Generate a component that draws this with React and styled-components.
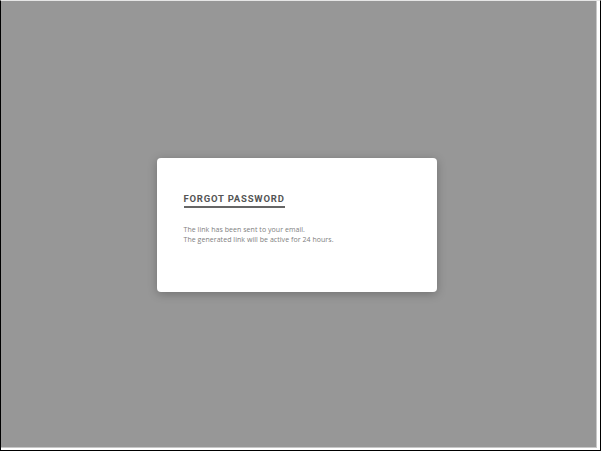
import React from "react";
import styled, { createGlobalStyle } from "styled-components";

const Global = createGlobalStyle`
  html, body { margin: 0; padding: 0; background: #fff; }
  body { font-family: Roboto, "Liberation Sans", sans-serif; }
`;

const Frame = styled.div`
  box-sizing: border-box;
  width: 601px;
  height: 451px;
  border: 1px solid #000;
  border-top: 1px solid #e6e6e6;
  background: #fff;
  padding: 0 3px 2px 0;
  display: flex;
`;

const Overlay = styled.div`
  flex: 1;
  background: #979797;
  border-right: 1px solid #c8c8c8;
  border-bottom: 1px solid #c8c8c8;
  display: flex;
  align-items: center;
  justify-content: center;
`;

const Card = styled.div`
  box-sizing: border-box;
  width: 280px;
  height: 134px;
  margin: 1px 4px 0 0;
  background: #fff;
  border-radius: 4px;
  box-shadow: 0 2px 10px rgba(0, 0, 0, 0.25);
  padding: 35px 27px 0 27px;
  display: flex;
  flex-direction: column;
  align-items: flex-start;
`;

const Title = styled.h1`
  margin: 0;
  font-family: Roboto, sans-serif;
  font-weight: 700;
  font-size: 9.5px;
  letter-spacing: 0.8px;
  line-height: 12px;
  color: #555;
  padding-bottom: 1px;
  border-bottom: 2px solid #666;
`;

const Body = styled.div`
  margin-top: 17px;
  font-family: "Open Sans", sans-serif;
  font-size: 7px;
  letter-spacing: 0.05px;
  line-height: 10.5px;
  color: #808080;
`;

export default function App() {
  return (
    <>
      <Global />
      <Frame>
        <Overlay>
          <Card>
            <Title>FORGOT PASSWORD</Title>
            <Body>
              <div>The link has been sent to your email.</div>
              <div>The generated link will be active for 24 hours.</div>
            </Body>
          </Card>
        </Overlay>
      </Frame>
    </>
  );
}
